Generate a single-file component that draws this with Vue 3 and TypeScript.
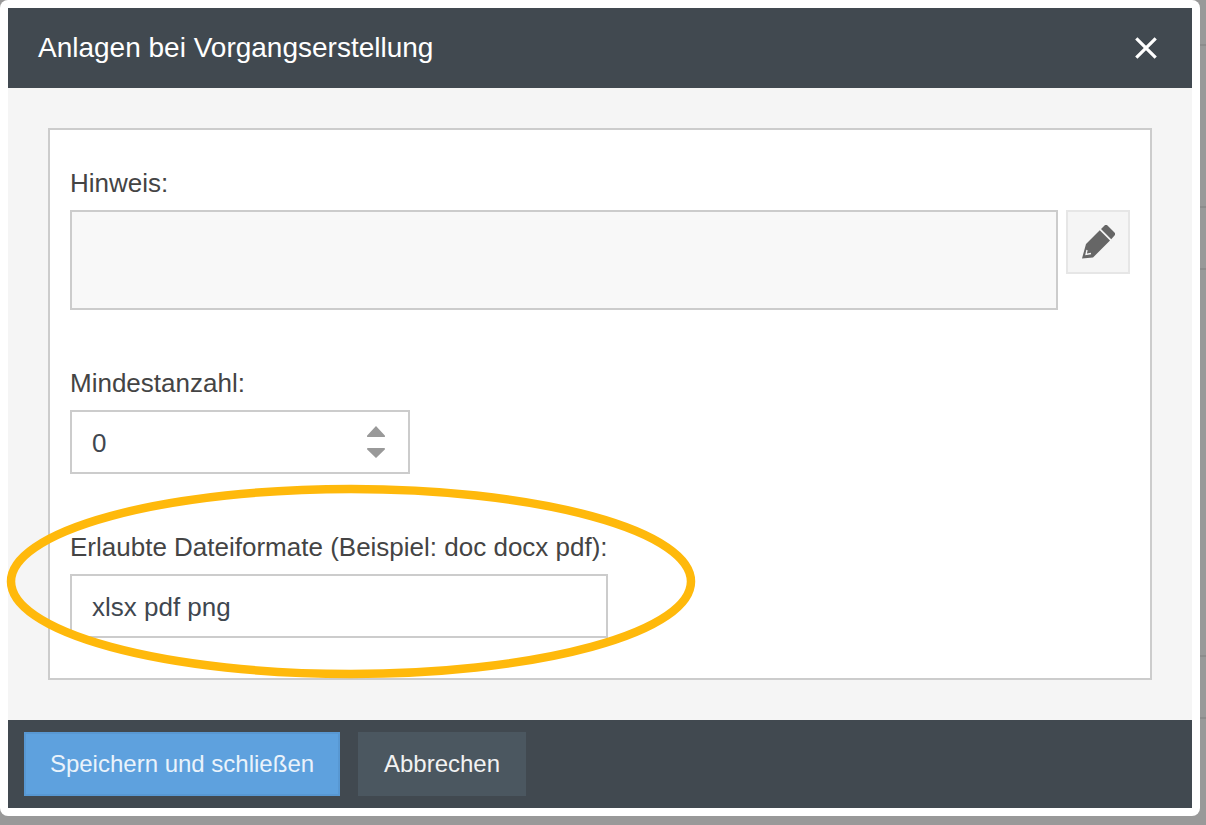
<script setup lang="ts">
const hinweis = ''
const mindestanzahl = '0'
const formate = 'xlsx pdf png'
const shadowLines: number[] = [44, 206, 268, 655, 717]
</script>

<template>
  <div class="page">
    <div class="edge">
      <i v-for="y in shadowLines" :key="y" class="edge-line" :style="{ top: y + 'px' }"></i>
    </div>
    <div class="modal">
      <header class="head">
        <h1 class="title">Anlagen bei Vorgangserstellung</h1>
        <button class="close" type="button" aria-label="Schließen">
          <svg width="24" height="24" viewBox="0 0 24 24">
            <path d="M2.300 2.300 21.700 21.700M21.700 2.300 2.300 21.700" stroke="#fff" stroke-width="3.200" fill="none" />
          </svg>
        </button>
      </header>
      <main class="body">
        <section class="panel">
          <div class="field">
            <label class="label">Hinweis:</label>
            <div class="note-row">
              <textarea class="note" :value="hinweis" readonly></textarea>
              <button class="edit" type="button" aria-label="Bearbeiten">
                <svg width="34" height="34" viewBox="0 0 34 34">
                  <path fill="#666" d="M20 4 23.500 .5Q25 -.8 26.500 .5L33.500 7.500Q34.800 9 33.500 10.500L30.250 14.250ZM18.750 5.250 29 15.500 12 32.500 1 33.500 5 19Z" />
                  <path fill="none" stroke="#f5f5f5" stroke-width="1.300" d="M6 25 5 29.500 10 28.500" />
                </svg>
              </button>
            </div>
          </div>
          <div class="field">
            <label class="label">Mindestanzahl:</label>
            <div class="number">
              <input class="input number-input" :value="mindestanzahl" readonly />
              <svg class="spin" width="18" height="34" viewBox="0 0 18 34">
                <path fill="#999" d="M9 1 17.800 10.500Q18.500 12 17 12H1Q-.5 12 .2 10.500ZM1 23H17Q18.500 23 17.800 24.500L9 33 .2 24.500Q-.5 23 1 23Z" />
              </svg>
            </div>
          </div>
          <div class="field last">
            <label class="label">Erlaubte Dateiformate (Beispiel: doc docx pdf):</label>
            <input class="input formats" :value="formate" readonly />
          </div>
        </section>
      </main>
      <footer class="foot">
        <button class="btn primary" type="button">Speichern und schließen</button>
        <button class="btn secondary" type="button">Abbrechen</button>
      </footer>
    </div>
    <svg class="mark" width="700" height="205" viewBox="0 0 700 205">
      <ellipse cx="351" cy="101.500" rx="340" ry="92.500" fill="none" stroke="#ffb90b" stroke-width="8.500" />
    </svg>
  </div>
</template>

<style>
html, body { margin: 0; background: #999; }
</style>

<style scoped>
.page {
  position: relative;
  width: 1206px;
  height: 825px;
  overflow: hidden;
  background: #999;
  font-family: "Liberation Sans", Arial, sans-serif;
  color: #444;
}
.edge { position: absolute; inset: 0; }
.edge-line { position: absolute; left: 1200px; width: 6px; height: 2px; background: #8c8c8c; }
.modal {
  position: relative;
  box-sizing: border-box;
  width: 1200px;
  height: 816px;
  padding: 8px;
  border-radius: 8px;
  background: #fff;
  display: flex;
  flex-direction: column;
}
.head {
  height: 80px;
  flex: none;
  box-sizing: border-box;
  padding: 0 30px;
  background: #414950;
  display: flex;
  align-items: center;
  justify-content: space-between;
}
.title { margin: 0; font-size: 28px; font-weight: 400; color: #fff; }
.close { border: 0; padding: 0; margin-right: 4px; background: none; display: flex; }
.body {
  flex: 1;
  box-sizing: border-box;
  padding: 40px;
  background: #f5f5f5;
}
.panel {
  box-sizing: border-box;
  height: 552px;
  border: 2px solid #ccc;
  background: #fff;
  padding: 35px 20px 40px;
}
.field { margin-bottom: 55px; }
.field.last { margin-bottom: 0; }
.label { display: block; height: 36px; margin-bottom: 9px; font-size: 26px; line-height: 36px; color: #444; }
.note-row { display: flex; gap: 8px; align-items: flex-start; }
.note {
  display: block;
  box-sizing: border-box;
  width: 988px;
  height: 100px;
  border: 2px solid #ccc;
  background: #f8f8f8;
  resize: none;
  outline: 0;
}
.edit {
  box-sizing: border-box;
  width: 64px;
  height: 64px;
  padding: 0;
  border: 2px solid #e6e6e6;
  background: #f5f5f5;
  display: flex;
  align-items: center;
  justify-content: center;
}
.input {
  display: block;
  box-sizing: border-box;
  height: 64px;
  padding: 2px 20px 0;
  border: 2px solid #ccc;
  background: #fff;
  outline: 0;
  font: 26px "Liberation Sans", Arial, sans-serif;
  color: #3f4750;
}
.number { position: relative; width: 340px; }
.number-input { width: 100%; }
.spin { position: absolute; top: 15px; right: 25px; }
.formats { width: 538px; }
.foot {
  height: 88px;
  flex: none;
  box-sizing: border-box;
  padding: 12px 16px;
  background: #414950;
  display: flex;
  gap: 18px;
}
.btn {
  box-sizing: border-box;
  height: 64px;
  padding: 0;
  border: 0;
  font: 24px "Liberation Sans", Arial, sans-serif;
}
.primary {
  width: 316px;
  background: #5ea1de;
  border: 2px solid #5898d3;
  color: #eaf3fb;
}
.secondary { width: 168px; background: #4b5760; color: #f2f2f2; }
.mark { position: absolute; left: 0; top: 480px; pointer-events: none; }
</style>
